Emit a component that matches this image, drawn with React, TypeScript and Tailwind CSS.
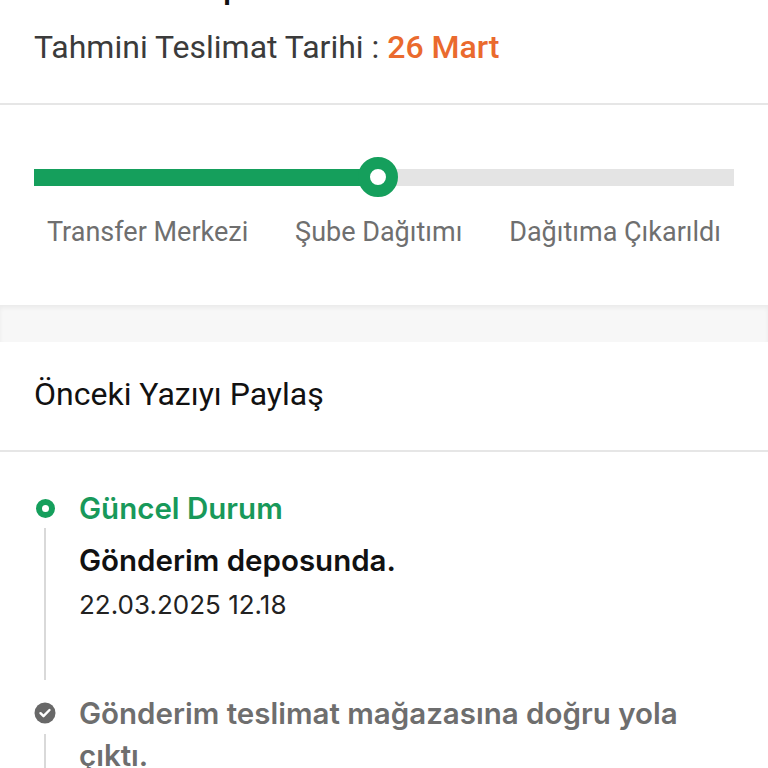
import React from 'react';

const steps = ['Transfer Merkezi', 'Şube Dağıtımı', 'Dağıtıma Çıkarıldı'];

function CheckDot() {
  return (
    <svg width="22" height="22" viewBox="0 0 22 22">
      <circle cx="11" cy="11" r="10.5" fill="#686868" />
      <path d="M6.5 11.2l3 3 6-6.2" fill="none" stroke="#fff" strokeWidth="2.4" strokeLinecap="round" strokeLinejoin="round" />
    </svg>
  );
}

export default function App() {
  return (
    <div className="min-h-screen bg-white overflow-hidden">
      {/* Header */}
      <div className="px-[34px] pb-[36px] border-b-2 border-[#e6e6e6] font-['Roboto',sans-serif]">
        <div className="-mt-[32px] h-[40px] text-[31px] leading-[40px] font-semibold text-[#111] font-['Inter',sans-serif] whitespace-nowrap">
          Gönderi Takip
        </div>
        <div className="mt-[19px] text-[32px] leading-[40px] text-[#3b3b3b] whitespace-nowrap">
          Tahmini Teslimat Tarihi : <span className="font-medium text-[#ea6a2e]">26 Mart</span>
        </div>
      </div>

      {/* Progress */}
      <div className="px-[34px] pt-[52px] pb-[57px] font-['Roboto',sans-serif]">
        <div className="relative h-10 flex items-center">
          <div className="h-[17px] w-full bg-[#e4e4e4]">
            <div className="h-full w-[344px] bg-[#159f5c]" />
          </div>
          <div className="absolute left-[324px] top-0 w-10 h-10 rounded-full border-[12px] border-[#159f5c] bg-white" />
        </div>
        <div className="mt-[19px] px-[13px] flex justify-between text-[27px] leading-[32px] text-[#6f6f6f] whitespace-nowrap">
          {steps.map((s) => (
            <span key={s}>{s}</span>
          ))}
        </div>
      </div>

      <div className="h-[37px] bg-[#f7f7f7] shadow-[inset_0_3px_4px_rgba(0,0,0,0.05)]" />

      {/* Share */}
      <div className="px-[34px] pt-[32px] pb-[36px] border-b-2 border-[#e6e6e6] font-['Roboto',sans-serif]">
        <div className="text-[32px] leading-[40px] text-[#111]">Önceki Yazıyı Paylaş</div>
      </div>

      {/* Timeline */}
      <div className="px-[34px] pt-[36px] font-['Inter',sans-serif]">
        <div className="flex gap-[23px]">
          <div className="w-[22px] flex flex-col items-center">
            <div className="h-10 flex items-center">
              <div className="w-[19px] h-[19px] rounded-full border-[6px] border-[#159f5c] bg-white" />
            </div>
            <div className="flex-1 w-[2px] bg-[#d9d9d9] mb-[12px]" />
          </div>
          <div className="flex-1 pb-[72px]">
            <div className="text-[29.5px] leading-[40px] font-semibold text-[#18995a]">Güncel Durum</div>
            <div className="mt-[12px] text-[29.5px] leading-[40px] font-semibold text-[#111]">Gönderim deposunda.</div>
            <div className="mt-[10px] text-[26px] leading-[30px] text-[#222]">22.03.2025 12.18</div>
          </div>
        </div>
        <div className="flex gap-[23px]">
          <div className="w-[22px] flex flex-col items-center">
            <div className="h-[42px] flex items-center">
              <CheckDot />
            </div>
            <div className="flex-1 w-[2px] bg-[#d9d9d9]" />
          </div>
          <div className="flex-1 pb-[40px]">
            <div className="text-[29.5px] leading-[42px] font-semibold text-[#6e6e6e]">
              Gönderim teslimat mağazasına doğru yola çıktı.
            </div>
          </div>
        </div>
      </div>
    </div>
  );
}
